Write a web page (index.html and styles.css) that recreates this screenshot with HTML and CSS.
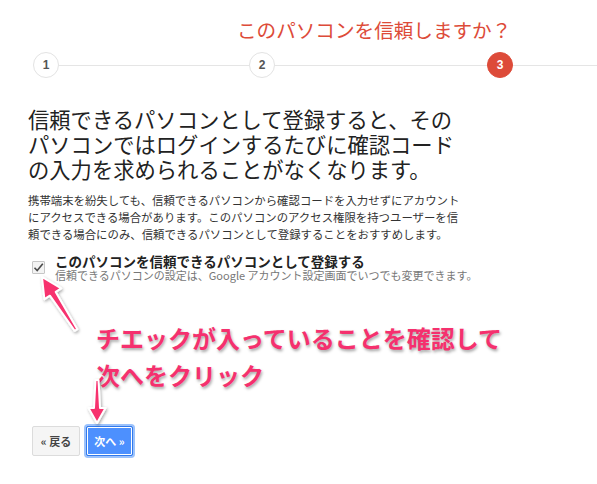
FILE: index.html
```html
<!DOCTYPE html>
<html lang="ja">
<head>
  <meta charset="UTF-8">
  <title>このパソコンを信頼しますか？</title>
  <link rel="stylesheet" href="styles.css">
</head>
<body>
  <div class="page">
    <h2 class="title">このパソコンを信頼しますか？</h2>

    <div class="steps">
      <span class="step">1</span>
      <span class="bar bar_one"></span>
      <span class="step">2</span>
      <span class="bar bar_two"></span>
      <span class="step step_active">3</span>
      <span class="bar bar_end"></span>
    </div>

    <div class="content">
      <h1 class="lead">信頼できるパソコンとして登録すると、そのパソコンではログインするたびに確認コードの入力を求められることがなくなります。</h1>
      <p class="note">携帯端末を紛失しても、信頼できるパソコンから確認コードを入力せずにアカウントにアクセスできる場合があります。このパソコンのアクセス権限を持つユーザーを信頼できる場合にのみ、信頼できるパソコンとして登録することをおすすめします。</p>

      <div class="trust">
        <span class="checkbox">
          <svg width="11" height="11" viewBox="0 0 11 11"><path d="M1.5 5.8 L4.2 8.6 L9.8 1.8" fill="none" stroke="#4a4a4a" stroke-width="1.6"/></svg>
        </span>
        <div class="trust_text">
          <div class="trust_label">このパソコンを信頼できるパソコンとして登録する</div>
          <div class="trust_sub">信頼できるパソコンの設定は、Google アカウント設定画面でいつでも変更できます。</div>
        </div>
      </div>
    </div>

    <div class="callout">チエックが入っていることを確認して<br>次へをクリック</div>

    <div class="buttons">
      <a href="#" class="button button_back">« 戻る</a>
      <a href="#" class="button button_next">次へ »</a>
    </div>

    <!-- annotation arrows drawn over the page -->
    <svg class="arrows" width="597" height="484" viewBox="0 0 597 484">
      <defs>
        <filter id="shadow" x="-50%" y="-50%" width="200%" height="200%">
          <feDropShadow dx="1" dy="1.5" stdDeviation="1.5" flood-color="#000" flood-opacity="0.35"/>
        </filter>
      </defs>
      <g filter="url(#shadow)" fill="#f7306e" stroke="#fff" stroke-width="2" stroke-linejoin="round">
        <polygon points="42,277 44.4,299.2 49.9,295.7 74.7,330.8 77.3,329.2 55.7,291.9 61.2,288.4"/>
        <polygon points="97,423 88.5,408 94,408 95.5,380 98.5,380 100,408 105.5,408"/>
      </g>
    </svg>
  </div>
</body>
</html>
```

FILE: styles.css
```css
body {
  margin: 0;
  background-color: #fff;
  font-family: "Noto Sans CJK JP", "Liberation Sans", sans-serif;
  color: #222;
}
.page {
  position: relative;
  width: 597px;
  height: 484px;
  overflow: hidden;
}
.title {
  margin: 0 0 0 237px;
  padding-top: 18px;
  font-size: 19.6px;
  line-height: 24px;
  font-weight: normal;
  color: #dd4b39;
}
.steps {
  display: flex;
  align-items: center;
  margin-top: 10px;
  padding-left: 33px;
  height: 26px;
}
.step {
  box-sizing: border-box;
  width: 26px;
  height: 26px;
  border: 1px solid #e3e3e3;
  border-radius: 50%;
  background: #fff;
  display: flex;
  align-items: center;
  justify-content: center;
  font-family: "Liberation Sans", Arial, sans-serif;
  font-weight: bold;
  font-size: 12px;
  color: #555;
}
.step_active {
  border-color: #dd4b39;
  background: #dd4b39;
  color: #fff;
}
.bar {
  height: 1px;
  background: #e5e5e5;
}
.bar_one {
  width: 190px;
}
.bar_two {
  width: 212px;
}
.bar_end {
  flex: 1;
}
.content {
  padding-left: 28px;
}
.lead {
  width: 440px;
  margin: 28px 0 0 0;
  font-size: 21.3px;
  line-height: 25px;
  font-weight: normal;
  color: #222;
}
.note {
  width: 440px;
  margin: 11px 0 0 0;
  font-size: 11.4px;
  line-height: 17px;
  color: #333;
}
.trust {
  display: flex;
  margin-top: 11px;
  padding-left: 4px;
}
.checkbox {
  box-sizing: border-box;
  flex: none;
  width: 13px;
  height: 13px;
  margin-top: 7px;
  margin-right: 10px;
  border: 1px solid #c6c6c6;
  border-radius: 1px;
  background: #f3f3f3;
  display: flex;
  align-items: center;
  justify-content: center;
}
.trust_label {
  font-size: 13.5px;
  line-height: 15px;
  font-weight: bold;
  color: #222;
}
.trust_sub {
  font-size: 11px;
  line-height: 13px;
  color: #777;
}
.callout {
  margin: 37px 0 0 96px;
  font-size: 24px;
  line-height: 37px;
  font-weight: bold;
  color: #f5306e;
  -webkit-text-stroke: 4px #fff;
  paint-order: stroke fill;
  text-shadow: 1px 2px 3px rgba(0, 0, 0, 0.35);
}
.buttons {
  display: flex;
  gap: 6px;
  margin: 33px 0 0 32px;
}
.button {
  box-sizing: border-box;
  display: inline-flex;
  align-items: center;
  justify-content: center;
  height: 30px;
  padding: 0;
  border-radius: 2px;
  font-size: 11px;
  font-weight: bold;
  white-space: nowrap;
  text-decoration: none;
}
.button_back {
  width: 48px;
  color: #444;
  background-color: #f5f5f5;
  border: 1px solid #dcdcdc;
}
.button_next {
  width: 47px;
  color: #fff;
  background-color: #4d90fe;
  border: 1px solid #3079ed;
  box-shadow: inset 0 0 0 1px #fff, 0 0 0 2px #9cc2fb;
}
.arrows {
  position: absolute;
  top: 0;
  left: 0;
  pointer-events: none;
}
```
